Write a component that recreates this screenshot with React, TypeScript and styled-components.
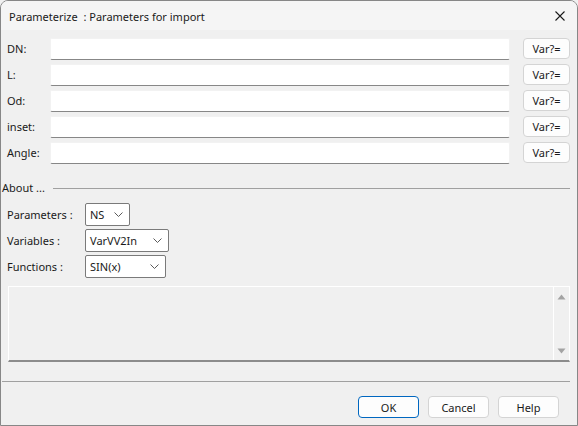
import React from 'react';
import styled, { createGlobalStyle } from 'styled-components';

const GlobalStyle = createGlobalStyle`
  html, body {
    margin: 0;
    padding: 0;
    background: #f0f0f0;
  }
  * {
    box-sizing: border-box;
  }
`;

const fields = ['DN:', 'L:', 'Od:', 'inset:', 'Angle:'];

const aboutRows = [
  { label: 'Parameters :', value: 'NS', width: 45 },
  { label: 'Variables :', value: 'VarVV2In', width: 84 },
  { label: 'Functions :', value: 'SIN(x)', width: 81 },
];

const Chevron = () => (
  <svg width="9" height="5" viewBox="0 0 9 5">
    <path d="M0.5 0.5 L4.5 4.5 L8.5 0.5" fill="none" stroke="#5a5a5a" strokeWidth="1" />
  </svg>
);

const CloseIcon = () => (
  <svg width="10" height="10" viewBox="0 0 10 10">
    <path d="M0.5 0.5 L9.5 9.5 M9.5 0.5 L0.5 9.5" stroke="#1a1a1a" strokeWidth="1.1" />
  </svg>
);

const Triangle = ({ up }: { up: boolean }) => (
  <svg width="9" height="6" viewBox="0 0 9 6">
    <path d={up ? 'M0.5 5.5 L4.5 0.5 L8.5 5.5 Z' : 'M0.5 0.5 L8.5 0.5 L4.5 5.5 Z'} fill="#a3a3a3" />
  </svg>
);

export default function App() {
  return (
    <>
      <GlobalStyle />
      <Window>
        <TitleBar>
          <Title>Parameterize&nbsp; : Parameters for import</Title>
          <CloseButton>
            <CloseIcon />
          </CloseButton>
        </TitleBar>

        <Body>
          <FieldList>
            {fields.map((f) => (
              <FieldRow key={f}>
                <FieldLabel>{f}</FieldLabel>
                <TextInput />
                <SmallButton>Var?=</SmallButton>
              </FieldRow>
            ))}
          </FieldList>

          <GroupHeader>
            <GroupTitle>About ...</GroupTitle>
            <GroupLine />
          </GroupHeader>

          <AboutList>
            {aboutRows.map((r) => (
              <AboutRow key={r.label}>
                <AboutLabel>{r.label}</AboutLabel>
                <Combo $width={r.width}>
                  <span>{r.value}</span>
                  <Chevron />
                </Combo>
              </AboutRow>
            ))}
          </AboutList>

          <InfoBox>
            <InfoText />
            <ScrollColumn>
              <Triangle up />
              <Triangle up={false} />
            </ScrollColumn>
          </InfoBox>

          <Separator />

          <ButtonBar>
            <DialogButton $default>OK</DialogButton>
            <DialogButton>Cancel</DialogButton>
            <DialogButton>Help</DialogButton>
          </ButtonBar>
        </Body>
      </Window>
    </>
  );
}

const Window = styled.div`
  width: 578px;
  height: 426px;
  border: 1px solid #878787;
  border-radius: 8px 8px 0 0;
  background: #f0f0f0;
  display: flex;
  flex-direction: column;
  overflow: hidden;
  font-family: 'Segoe UI', 'Noto Sans', 'Open Sans', sans-serif;
  font-size: 11px;
  color: #000;
`;

const TitleBar = styled.div`
  height: 29px;
  flex: none;
  display: flex;
  align-items: center;
  justify-content: space-between;
  padding: 0 12px 0 8px;
  background: #f5f5f5;
`;

const Title = styled.div`
  color: #1a1a1a;
  padding-top: 1px;
`;

const CloseButton = styled.div`
  display: flex;
  align-items: center;
  padding-top: 1px;
`;

const Body = styled.div`
  flex: 1;
  display: flex;
  flex-direction: column;
  padding-top: 8px;
`;

const FieldList = styled.div`
  display: flex;
  flex-direction: column;
  gap: 4px;
  padding: 0 7px 0 6px;
`;

const FieldRow = styled.div`
  display: flex;
  align-items: flex-start;
  height: 22px;
`;

const FieldLabel = styled.div`
  width: 43px;
  line-height: 22px;
  color: #1a1a1a;
`;

const TextInput = styled.div`
  flex: 1;
  height: 22px;
  background: #fff;
  border: 1px solid #f2f2f2;
  border-bottom: 1px solid #878787;
  border-radius: 2px;
`;

const SmallButton = styled.div`
  width: 47px;
  height: 21px;
  margin-left: 13px;
  display: flex;
  align-items: center;
  justify-content: center;
  background: #fdfdfd;
  border: 1px solid #d4d4d4;
  border-radius: 4px;
  color: #1a1a1a;
`;

const GroupHeader = styled.div`
  display: flex;
  align-items: center;
  margin-top: 17px;
  padding: 0 7px 0 1px;
  height: 14px;
`;

const GroupTitle = styled.div`
  color: #1a1a1a;
  line-height: 14px;
`;

const GroupLine = styled.div`
  flex: 1;
  height: 1px;
  margin-left: 8px;
  background: #a0a0a0;
`;

const AboutList = styled.div`
  display: flex;
  flex-direction: column;
  gap: 3px;
  margin-top: 8px;
  padding-left: 6px;
`;

const AboutRow = styled.div`
  display: flex;
  align-items: center;
  height: 23px;
`;

const AboutLabel = styled.div`
  width: 78px;
  color: #1a1a1a;
`;

const Combo = styled.div<{ $width: number }>`
  width: ${(p) => p.$width}px;
  height: 23px;
  display: flex;
  align-items: center;
  justify-content: space-between;
  padding: 0 6px 0 4px;
  background: #fff;
  border: 1px solid #7a7a7a;
  border-radius: 2px;
  color: #1a1a1a;
`;

const InfoBox = styled.div`
  display: flex;
  height: 76px;
  margin: 8px 7px 0 7px;
  border: 1px solid #fff;
  border-bottom: 2px solid #8c8c8c;
`;

const InfoText = styled.div`
  flex: 1;
`;

const ScrollColumn = styled.div`
  width: 16px;
  display: flex;
  flex-direction: column;
  justify-content: space-between;
  align-items: center;
  padding: 7px 0 6px;
  border-left: 1px solid #fff;
`;

const Separator = styled.div`
  height: 1px;
  margin: 19px 7px 0 1px;
  background: #a0a0a0;
`;

const ButtonBar = styled.div`
  display: flex;
  justify-content: flex-end;
  gap: 9px;
  margin-top: 14px;
  padding-right: 18px;
`;

const DialogButton = styled.div<{ $default?: boolean }>`
  width: 61px;
  height: 22px;
  display: flex;
  align-items: center;
  justify-content: center;
  background: #fdfdfd;
  border: 1px solid ${(p) => (p.$default ? '#0067c0' : '#d4d4d4')};
  border-radius: 4px;
  color: #1a1a1a;
`;
